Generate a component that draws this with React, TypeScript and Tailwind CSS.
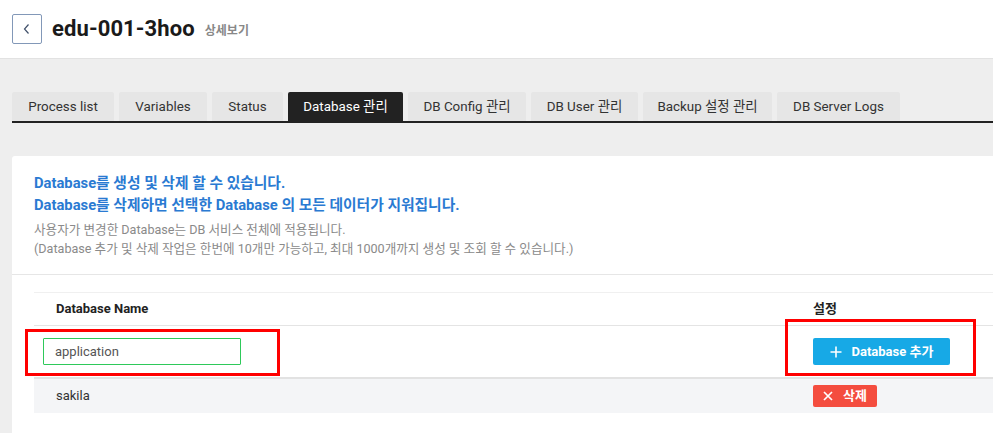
import React from "react";

const tabs: [string, number][] = [
  ["Process list", 102],
  ["Variables", 88],
  ["Status", 71],
  ["Database 관리", 115],
  ["DB Config 관리", 118],
  ["DB User 관리", 107],
  ["Backup 설정 관리", 129],
  ["DB Server Logs", 123],
];

export default function App() {
  return (
    <div
      className="relative w-[993px] h-[433px] overflow-hidden bg-[#eeeeee]"
      style={{ fontFamily: 'Roboto, "Noto Sans CJK KR", sans-serif' }}
    >
      {/* Header */}
      <div className="h-[59px] bg-white border-b border-[#e2e2e2] flex items-center pl-[12px]">
        <button className="w-[30px] h-[30px] border border-[#8298b8] rounded-[2px] flex items-center justify-center bg-white">
          <svg width="10" height="12" viewBox="0 0 10 12">
            <path d="M6.5 1.5 L2.5 6 L6.5 10.5" fill="none" stroke="#40506a" strokeWidth="1.2" />
          </svg>
        </button>
        <div className="ml-[10px] text-[22px] font-bold text-[#1a1a1a] leading-none tracking-[0.1px] -mt-[1px]">
          edu-001-3hoo
        </div>
        <div className="ml-[10px] text-[12px] font-bold text-[#888] mt-[3px]">상세보기</div>
      </div>

      {/* Tabs */}
      <div className="pt-[33px] pl-[12px]">
        <div className="flex gap-[5px] border-b-2 border-[#222]">
          {tabs.map(([t, w]) => {
            const active = t === "Database 관리";
            return (
              <div
                key={t}
                style={{ width: w }}
                className={
                  "h-[29px] pt-[1px] flex items-center justify-center text-[13.4px] rounded-t-[2px] " +
                  (active ? "bg-[#222222] text-white" : "bg-[#e6e6e6] text-[#333]")
                }
              >
                {t}
              </div>
            );
          })}
        </div>
      </div>

      {/* Card */}
      <div className="mt-[33px] ml-[12px] w-[1000px] h-[300px] bg-white rounded-[3px]">
        <div className="pl-[22px] pt-[16px] pb-[16px] border-b border-[#e6e6e6]">
          <div className="text-[14.75px] font-bold text-[#2a7ad2] leading-[22px]">
            Database를 생성 및 삭제 할 수 있습니다.
          </div>
          <div className="text-[14.75px] font-bold text-[#2a7ad2] leading-[22px]">
            Database를 삭제하면 선택한 Database 의 모든 데이터가 지워집니다.
          </div>
          <div className="mt-[4px] text-[12.6px] text-[#8a8a8a] leading-[19px]">
            사용자가 변경한 Database는 DB 서비스 전체에 적용됩니다.
          </div>
          <div className="text-[12.6px] text-[#8a8a8a] leading-[19px]">
            (Database 추가 및 삭제 작업은 한번에 10개만 가능하고, 최대 1000개까지 생성 및 조회 할 수 있습니다.)
          </div>
        </div>

        {/* Table */}
        <div className="mt-[17px] ml-[22px] w-[978px] border-t border-[#f0f0f0]">
          <div className="h-[33px] flex items-center border-b border-[#e4e4e4] text-[13px] font-bold text-[#222]">
            <div className="w-[757px] pl-[22px]">Database Name</div>
            <div className="pl-[22px]">설정</div>
          </div>
          <div className="h-[51px] flex items-center">
            <div className="w-[757px] pl-[9px]">
              <div className="w-[198px] h-[27px] border border-[#2ec95a] rounded-[1px] flex items-center pl-[11px] text-[13px] text-[#555]">
                application
              </div>
            </div>
            <div className="pl-[22px]">
              <button className="w-[137px] h-[27px] bg-[#17a9e6] rounded-[2px] flex items-center justify-center gap-[10px] text-white text-[13px] font-bold">
                <svg width="12" height="12" viewBox="0 0 12 12">
                  <path d="M6 0.5 V11.5 M0.5 6 H11.5" stroke="white" strokeWidth="1.6" />
                </svg>
                <span>Database 추가</span>
              </button>
            </div>
          </div>
          <div className="h-[36px] flex items-center bg-[#f4f5f7] border-t-2 border-[#e2e2e2]">
            <div className="w-[757px] pl-[22px] text-[13px] text-[#333]">sakila</div>
            <div className="pl-[22px]">
              <button className="w-[64px] h-[22px] bg-[#f44d3f] rounded-[2px] flex items-center justify-center gap-[10px] text-white text-[13px] font-bold">
                <svg width="10" height="10" viewBox="0 0 10 10">
                  <path d="M1 1 L9 9 M9 1 L1 9" stroke="white" strokeWidth="1.7" />
                </svg>
                <span>삭제</span>
              </button>
            </div>
          </div>
        </div>
      </div>

      {/* Annotation boxes */}
      <div className="absolute left-[25px] top-[329px] w-[255px] h-[47px] border-[3px] border-[#ff0000] pointer-events-none" />
      <div className="absolute left-[785px] top-[319px] w-[191px] h-[57px] border-[3px] border-[#ff0000] pointer-events-none" />
    </div>
  );
}
